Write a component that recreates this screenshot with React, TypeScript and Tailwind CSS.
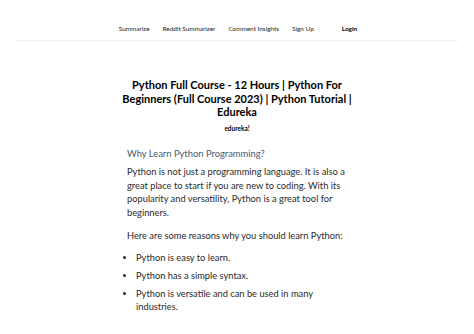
export default function App() {
  return (
    <div className="w-[474px] h-[334px] bg-white overflow-hidden" style={{ fontFamily: 'Lato, "Open Sans", sans-serif' }}>
      <div className="px-4">
        <nav className="h-[41px] border-b border-[#f0f0f0] flex items-end justify-center pb-[6px]">
          <div className="flex items-center gap-[13px] text-[6.4px] leading-[10px] text-[#222] ml-[2px]">
            <span>Summarize</span>
            <span>Reddit Summarizer</span>
            <span>Comment Insights</span>
            <span>Sign Up</span>
            <span className="ml-[15px] font-bold text-black">Login</span>
          </div>
        </nav>
      </div>
      <main className="w-[220px] mx-auto pt-[37px] text-[#2a2a2a]">
        <h1 className="text-center font-bold text-[11px] leading-[13.5px] text-black -mx-[5px]">
          Python Full Course - 12 Hours | Python For Beginners (Full Course 2023) | Python Tutorial | Edureka
        </h1>
        <p className="text-center font-bold text-[6.5px] leading-[10px] mt-[5px] text-black">edureka!</p>
        <h2 className="text-[9.4px] leading-[13px] text-[#4a5a73] mt-[13px]">Why Learn Python Programming?</h2>
        <p className="text-[9.3px] leading-[13.6px] mt-[5.5px]">
          Python is not just a programming language. It is also a great place to start if you are new to coding. With its popularity and versatility, Python is a great tool for beginners.
        </p>
        <p className="text-[9.3px] leading-[13.6px] mt-[9.5px]">Here are some reasons why you should learn Python:</p>
        <ul className="list-disc pl-[9px] mt-[9px] text-[9.3px] leading-[13.6px] flex flex-col gap-[4px]">
          <li>Python is easy to learn.</li>
          <li>Python has a simple syntax.</li>
          <li>Python is versatile and can be used in many industries.</li>
        </ul>
      </main>
    </div>
  );
}
